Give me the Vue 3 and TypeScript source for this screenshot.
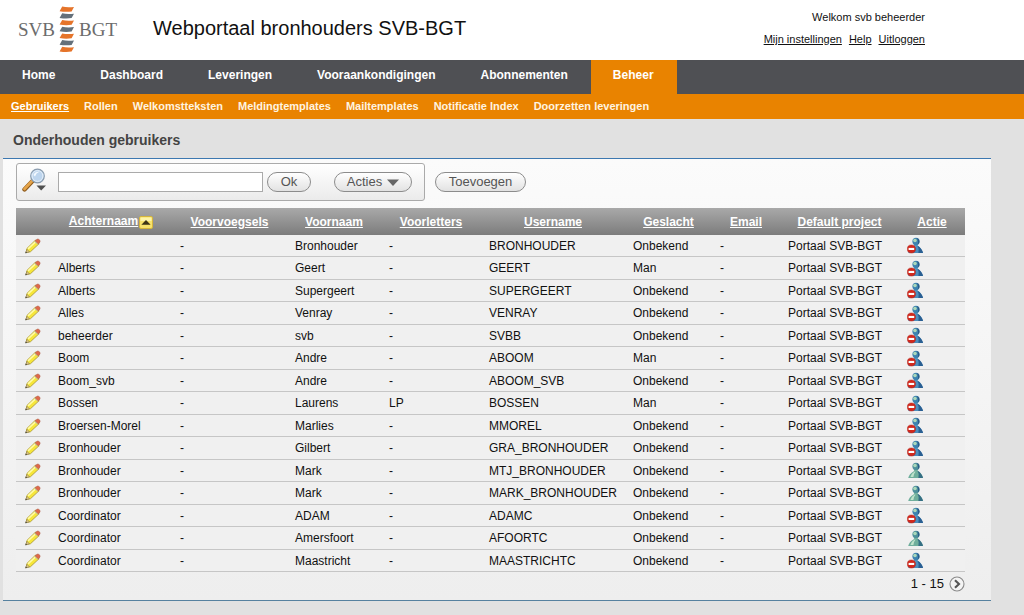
<script setup lang="ts">
import { ref } from 'vue'

interface User {
  lastName: string
  firstName: string
  initials: string
  username: string
  gender: string
  blocked: boolean
}

const row = (
  lastName: string,
  firstName: string,
  username: string,
  gender = 'Onbekend',
  blocked = true,
  initials = '-',
): User => ({ lastName, firstName, initials, username, gender, blocked })

const mainMenu: string[] = ['Home', 'Dashboard', 'Leveringen', 'Vooraankondigingen', 'Abonnementen', 'Beheer']
const subMenu: string[] = ['Gebruikers', 'Rollen', 'Welkomstteksten', 'Meldingtemplates', 'Mailtemplates', 'Notificatie Index', 'Doorzetten leveringen']
const columns: string[] = ['Achternaam', 'Voorvoegsels', 'Voornaam', 'Voorletters', 'Username', 'Geslacht', 'Email', 'Default project', 'Actie']

const users: User[] = [
  row('', 'Bronhouder', 'BRONHOUDER'),
  row('Alberts', 'Geert', 'GEERT', 'Man'),
  row('Alberts', 'Supergeert', 'SUPERGEERT'),
  row('Alles', 'Venray', 'VENRAY'),
  row('beheerder', 'svb', 'SVBB'),
  row('Boom', 'Andre', 'ABOOM', 'Man'),
  row('Boom_svb', 'Andre', 'ABOOM_SVB'),
  row('Bossen', 'Laurens', 'BOSSEN', 'Man', true, 'LP'),
  row('Broersen-Morel', 'Marlies', 'MMOREL'),
  row('Bronhouder', 'Gilbert', 'GRA_BRONHOUDER'),
  row('Bronhouder', 'Mark', 'MTJ_BRONHOUDER', 'Onbekend', false),
  row('Bronhouder', 'Mark', 'MARK_BRONHOUDER', 'Onbekend', false),
  row('Coordinator', 'ADAM', 'ADAMC'),
  row('Coordinator', 'Amersfoort', 'AFOORTC', 'Onbekend', false),
  row('Coordinator', 'Maastricht', 'MAASTRICHTC'),
]

const search = ref('')
</script>

<template>
  <div class="page">
    <header class="top">
      <div class="logo">
        <span>SVB</span>
        <svg width="16" height="48" viewBox="0 0 16 48" aria-hidden="true">
          <g v-for="i in 7" :key="i" :transform="`translate(0 ${(i - 1) * 6.7})`">
            <path d="M3.2 .6 Q8 1.8 15 1 L12.6 5.4 Q7 6.4 .6 5.2 Z" :fill="i % 2 ? '#e5742a' : '#64707a'" />
          </g>
        </svg>
        <span>BGT</span>
      </div>
      <h1>Webportaal bronhouders SVB-BGT</h1>
      <div class="account">
        <p>Welkom svb beheerder</p>
        <nav><a href="#">Mijn instellingen</a><a href="#">Help</a><a href="#">Uitloggen</a></nav>
      </div>
    </header>

    <nav class="main-nav">
      <a v-for="item in mainMenu" :key="item" href="#" :class="{ active: item === 'Beheer' }">{{ item }}</a>
    </nav>
    <nav class="sub-nav">
      <a v-for="item in subMenu" :key="item" href="#" :class="{ active: item === 'Gebruikers' }">{{ item }}</a>
    </nav>

    <h2>Onderhouden gebruikers</h2>
    <main class="panel">
      <div class="toolbar">
        <form class="search" @submit.prevent>
          <button class="lens" type="button" aria-label="Zoekkolom kiezen">
            <svg width="26" height="25" viewBox="0 0 26 25">
              <path d="M2.5 21.5 L11 12.5" stroke="#8d5a1c" stroke-width="4.4" stroke-linecap="round" />
              <path d="M2.5 21 L10.5 12.5" stroke="#e5a449" stroke-width="2.8" stroke-linecap="round" />
              <circle cx="15.5" cy="8" r="6.8" fill="#bdd5ee" stroke="#8a9cae" stroke-width="1.2" />
              <circle cx="15.5" cy="8" r="5.4" fill="none" stroke="#e4effa" stroke-width="1" />
              <path d="M11.5 7 Q13 3.4 17.4 3.8 Q14 5 13 8.5 Z" fill="#f3f9ff" />
              <path d="M14.5 17.5 H24 L19.2 22.6 Z" fill="#505050" />
            </svg>
          </button>
          <input v-model="search" type="text" aria-label="Zoeken" />
          <button class="pill ok" type="submit">Ok</button>
          <button class="pill actions" type="button">
            Acties
            <svg width="12" height="7" viewBox="0 0 12 7" aria-hidden="true"><path d="M0 .5 H12 L6 7 Z" fill="#666" /></svg>
          </button>
        </form>
        <button class="pill add" type="button">Toevoegen</button>
      </div>

      <table>
        <colgroup>
          <col class="c-edit" /><col class="c-last" /><col class="c-prefix" /><col class="c-first" /><col class="c-init" />
          <col class="c-user" /><col class="c-gender" /><col class="c-mail" /><col class="c-project" /><col class="c-action" />
        </colgroup>
        <thead>
          <tr>
            <td></td>
            <th v-for="(column, i) in columns" :key="column" scope="col">
              <a href="#">{{ column }}</a>
              <svg v-if="i === 0" class="sort" width="14" height="13" viewBox="0 0 14 13" aria-hidden="true">
                <rect x=".5" y=".5" width="13" height="12" rx="1.5" fill="#f7e26a" stroke="#d5b53c" />
                <path d="M1.5 1.5 H12.5 V5 H1.5 Z" fill="#fdf4a8" />
                <path d="M2.4 8.8 L7 4 L11.6 8.8 Z" fill="#3d3416" />
              </svg>
            </th>
          </tr>
        </thead>
        <tbody>
          <tr v-for="user in users" :key="user.username">
            <td>
              <a class="icon" href="#" aria-label="Bewerken">
                <svg width="18" height="16" viewBox="0 0 18 16">
                  <path d="M2 14.6 L3 10.4 L11.4 2.2 L15.2 5.6 L6.4 13.8 Z" fill="#f6e63a" stroke="#a8942a" stroke-width=".8" />
                  <path d="M4 10.8 L12 3.4" stroke="#fffba6" stroke-width="1.6" />
                  <path d="M11 3 L13 1.2 Q14 .6 15.4 1.8 Q16.6 3 15.8 4.2 L14.2 6 Z" fill="#e0694a" stroke="#b0604a" stroke-width=".6" />
                  <path d="M10.6 3.3 L13.9 6.3" stroke="#b9b9a4" stroke-width="1" />
                  <path d="M3 11.4 L1.6 15 L5.4 13.8 Z" fill="#dcc48e" stroke="#7d7040" stroke-width=".5" />
                  <path d="M1.9 13.6 L1.3 15.3 L3.1 14.7 Z" fill="#444" />
                </svg>
              </a>
            </td>
            <td>{{ user.lastName }}</td>
            <td>-</td>
            <td>{{ user.firstName }}</td>
            <td>{{ user.initials }}</td>
            <td>{{ user.username }}</td>
            <td>{{ user.gender }}</td>
            <td>-</td>
            <td>Portaal SVB-BGT</td>
            <td>
              <a class="icon" href="#" :aria-label="user.blocked ? 'Deblokkeren' : 'Blokkeren'">
                <svg width="17" height="17" viewBox="0 0 17 17">
                  <path d="M1.2 16 Q2 12 6.8 9.2 L7.6 7 H10.2 L11 9.2 Q15.2 11.6 16 16 Z" :fill="user.blocked ? '#4c8fbd' : '#6fae9c'" />
                  <path d="M10.4 8.4 Q15.2 11.4 16 16 H11.4 Q12.6 12 10.4 8.4 Z" :fill="user.blocked ? '#2a5f92' : '#356f84'" />
                  <path d="M7.6 9.4 Q4.4 11.4 3.4 15 H6.4 Q6.4 12 8.6 9.4 Z" fill="#bfe3cb" />
                  <circle cx="9" cy="4.4" r="3.6" :fill="user.blocked ? '#3d83b0' : '#4f919b'" />
                  <path d="M9.6 .9 A3.6 3.6 0 0 1 10.6 7.6 Q12 4 9.6 .9 Z" fill="#2a5a86" />
                  <circle cx="8" cy="3.5" r="1.8" fill="#a9d8ba" />
                  <g v-if="user.blocked">
                    <circle cx="4.4" cy="12" r="4.1" fill="#d2281c" stroke="#a71a12" stroke-width=".4" />
                    <rect x="1.6" y="10.9" width="5.6" height="2.1" fill="#fff" />
                  </g>
                </svg>
              </a>
            </td>
          </tr>
        </tbody>
      </table>

      <footer class="pager">
        <span>1 - 15</span>
        <button type="button" aria-label="Volgende">
          <svg width="16" height="16" viewBox="0 0 16 16">
            <circle cx="8" cy="8" r="7" fill="#f4f4f4" stroke="#8a8a8a" stroke-width="1.1" />
            <path d="M6 4.2 L10 8 L6 11.8" fill="none" stroke="#555" stroke-width="2.1" />
          </svg>
        </button>
      </footer>
    </main>
  </div>
</template>

<style>
body {
  margin: 0;
  background: #e1e1e1;
}
</style>

<style scoped>
.page {
  font: 12px/14px "Liberation Sans", Arial, sans-serif;
  color: #111;
  padding-bottom: 14px;
}
h1, h2, p {
  margin: 0;
}
.top {
  display: flex;
  box-sizing: border-box;
  height: 60px;
  padding: 0 99px 0 18px;
  background: #fff;
}
.logo {
  display: flex;
  align-items: center;
  justify-content: space-between;
  width: 99px;
  font: 19px/22px "Liberation Serif", "Times New Roman", serif;
  color: #6c6c6c;
}
h1 {
  margin-left: 36px;
  font-size: 20px;
  font-weight: 400;
  line-height: 56px;
}
.account {
  margin-left: auto;
  padding-top: 10px;
  font-size: 11px;
  text-align: right;
}
.account nav {
  display: flex;
  gap: 7px;
  margin-top: 8px;
}
.account a {
  color: #111;
}
.main-nav {
  display: flex;
  background: #4f5054;
}
.main-nav a {
  padding: 0 23px 4px 22px;
  color: #fff;
  font-weight: 700;
  line-height: 30px;
  text-decoration: none;
}
.main-nav a.active {
  background: #e98300;
}
.sub-nav {
  display: flex;
  gap: 15px;
  padding: 0 11px;
  background: #e98300;
}
.sub-nav a {
  color: #fff4e0;
  font-size: 11px;
  font-weight: 700;
  line-height: 25px;
  text-decoration: none;
}
.sub-nav a.active {
  color: #fff;
  text-decoration: underline;
}
h2 {
  padding: 11px 13px 8px;
  font-size: 14px;
  line-height: 20px;
  color: #444;
}
.panel {
  margin: 0 33px 0 3px;
  padding: 4px 26px 8px 13px;
  border-top: 1px solid #3d78b0;
  border-bottom: 1px solid #56819f;
  background: linear-gradient(#fbfbfb, #eee);
}
.toolbar {
  display: flex;
  align-items: center;
  gap: 10px;
}
.search {
  display: flex;
  align-items: center;
  box-sizing: border-box;
  height: 38px;
  padding: 0 12px 0 5px;
  border: 1px solid #aaa;
  border-radius: 3px;
  background: linear-gradient(#fff, #ebebeb);
}
.lens {
  display: flex;
  padding: 0 0 3px;
  border: 0;
  background: none;
}
.search input {
  box-sizing: border-box;
  width: 205px;
  height: 20px;
  margin: 0 4px 0 10px;
  border: 1px solid #aaa;
  background: #fff;
}
.pill {
  display: flex;
  align-items: center;
  justify-content: center;
  gap: 5px;
  box-sizing: border-box;
  height: 20px;
  padding: 0;
  border: 1px solid #8c8c8c;
  border-radius: 10px;
  background: linear-gradient(#fff, #e2e2e2);
  color: #555;
  font: 13px/16px "Liberation Sans", Arial, sans-serif;
}
.ok {
  width: 44px;
}
.actions {
  width: 78px;
  margin-left: 23px;
}
.add {
  width: 91px;
}
table {
  width: 100%;
  margin-top: 7px;
  table-layout: fixed;
  border-collapse: separate;
  border-spacing: 0;
}
.c-edit { width: 34px; }
.c-last { width: 122px; }
.c-prefix { width: 115px; }
.c-first { width: 94px; }
.c-init { width: 100px; }
.c-user { width: 144px; }
.c-gender { width: 87px; }
.c-mail { width: 68px; }
.c-project { width: 119px; }
.c-action { width: 66px; }
thead tr {
  height: 27px;
  background: linear-gradient(#a9a9a9, #7c7c7c);
}
th {
  padding: 0;
  white-space: nowrap;
}
th a {
  color: #fff;
}
.sort {
  margin-left: 1px;
  vertical-align: -4px;
}
td {
  padding: 0 0 0 8px;
  white-space: nowrap;
}
tbody tr {
  height: 22px;
  background: #f0f0f0;
}
tbody tr:nth-child(even) {
  height: 23px;
}
tbody td {
  border-bottom: 1px solid #c6c6c6;
}
.icon {
  display: flex;
}
.pager {
  display: flex;
  align-items: center;
  justify-content: flex-end;
  gap: 5px;
  padding-top: 4px;
  font-size: 13px;
}
.pager button {
  display: flex;
  padding: 0;
  border: 0;
  background: none;
}
</style>
